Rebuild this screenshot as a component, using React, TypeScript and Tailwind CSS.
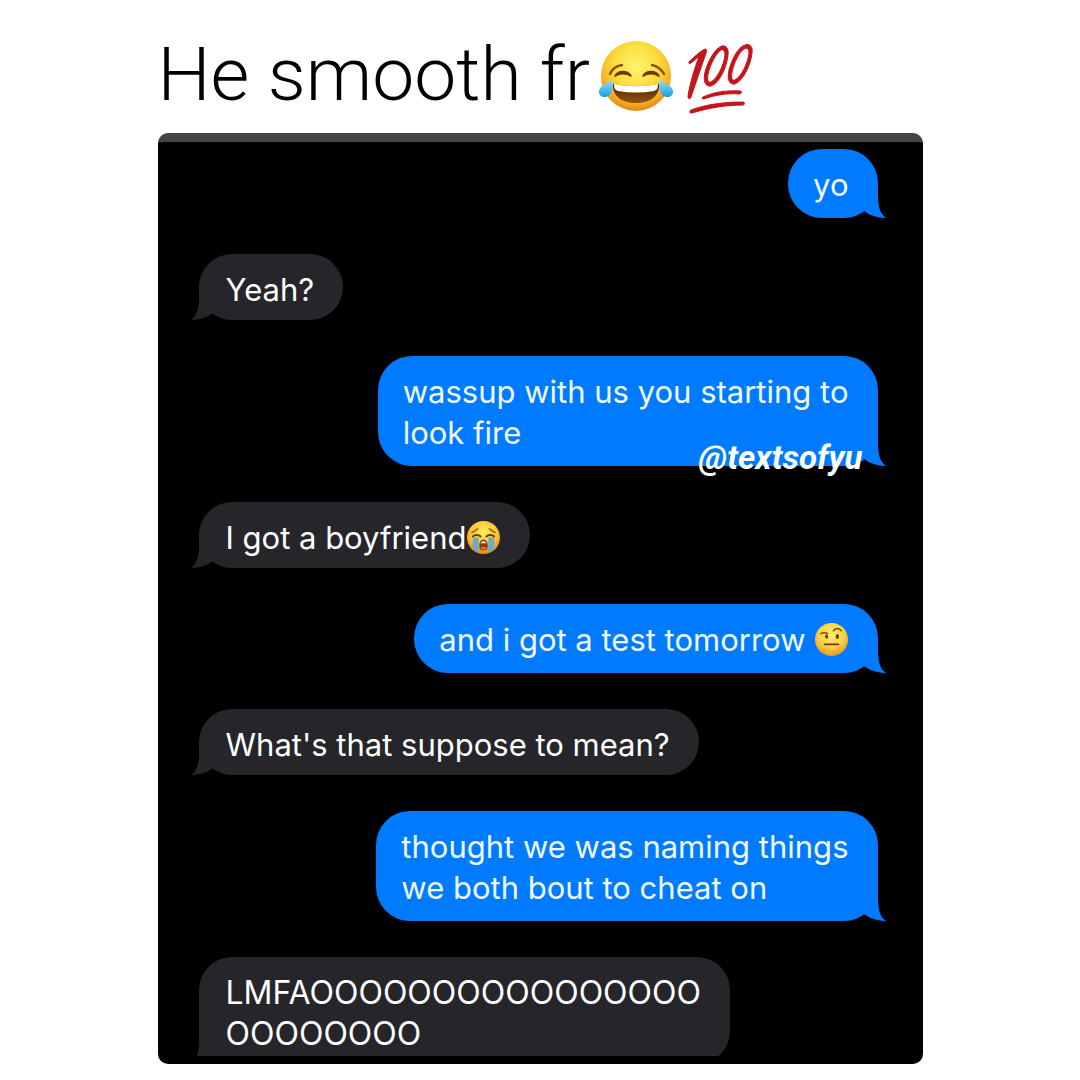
import type { ReactNode } from "react";

function JoyEmoji() {
  return (
    <svg role="img" aria-label="face with tears of joy" viewBox="0 0 76 72" className="mt-1 h-[72px] w-[76px] shrink-0">
      <defs>
        <radialGradient id="joyFace" cx="50%" cy="36%" r="65%">
          <stop offset="0" stopColor="#fff56e" />
          <stop offset="0.5" stopColor="#fddc3c" />
          <stop offset="0.82" stopColor="#f4ac22" />
          <stop offset="1" stopColor="#dd8511" />
        </radialGradient>
        <linearGradient id="joyMouth" x1="0" y1="0" x2="0" y2="1">
          <stop offset="0" stopColor="#4a2606" />
          <stop offset="1" stopColor="#94520d" />
        </linearGradient>
        <linearGradient id="joyTear" x1="0" y1="0" x2="0" y2="1">
          <stop offset="0" stopColor="#9be2fb" />
          <stop offset="1" stopColor="#1b9de2" />
        </linearGradient>
      </defs>
      <circle cx="38" cy="36" r="35" fill="url(#joyFace)" />
      <path d="M12 34C14 29 18 26 24 25M54 25C59 26 63 29 66 34" fill="none" stroke="#8a5208" strokeWidth="2.4" strokeLinecap="round" />
      <path d="M17 36C20 30 30 30 33 36C28 33 22 33 17 36ZM45 36C48 30 58 30 61 36C56 33 50 33 45 36Z" fill="#6c3a05" stroke="#6c3a05" strokeWidth="1.6" strokeLinejoin="round" />
      <path d="M15 44C30 47 46 47 61 44C62 56 52 63 38 63S14 56 15 44Z" fill="url(#joyMouth)" />
      <path d="M16 44C30 47 46 47 60 44C60 48 59 50 56 51C44 53 32 53 20 51C17 50 16 48 16 44Z" fill="#fff" />
      <path d="M14 39C16 47 14 57 7 57C1 57-1 51 3 47C6 44 11 43 14 39Z" fill="url(#joyTear)" />
      <path d="M62 39C60 47 62 57 69 57C75 57 77 51 73 47C70 44 65 43 62 39Z" fill="url(#joyTear)" />
    </svg>
  );
}

function HundredEmoji() {
  return (
    <svg role="img" aria-label="hundred points" viewBox="0 0 68 76" className="mt-1 h-[76px] w-[68px] shrink-0">
      <g fill="#c4151b" stroke="#c4151b" strokeWidth="1" strokeLinejoin="round">
        <path d="M3 22C7 18 13 12 19 9C21 9 21 11 20 13L5 57C4 60 2 59 2 56C4 43 9 27 13 17C10 18 7 22 5 23C4 24 2 23 3 22Z" />
        <path
          fillRule="evenodd"
          d="M36 6C40 5 43 9 42 15C41 26 34 43 25 46C19 47 17 41 19 32C22 21 29 8 36 6ZM35 10C30 13 24 25 22 34C21 40 22 43 25 42C31 39 38 25 39 15C39 11 37 9 35 10Z"
        />
        <path
          fillRule="evenodd"
          d="M59 5C64 3 67 7 66 13C65 24 58 40 49 44C43 45 41 39 43 30C46 19 52 7 59 5ZM58 9C53 12 48 23 46 32C45 38 46 41 49 40C55 37 62 23 63 13C63 9 61 7 58 9Z"
        />
        <path d="M17 57C28 52 41 50 54 51C56 51 56 53 54 54C41 53 29 55 18 59C16 59 15 58 17 57Z" />
        <path d="M5 70C21 64 40 62 57 62C59 62 59 65 57 65C40 65 22 68 6 73C4 74 3 71 5 70Z" />
      </g>
    </svg>
  );
}

function SobEmoji() {
  return (
    <svg role="img" aria-label="loudly crying face" viewBox="0 0 36 36" className="inline-block size-[35px] shrink-0">
      <defs>
        <radialGradient id="sobFace" cx="50%" cy="35%" r="65%">
          <stop offset="0" stopColor="#ffe95c" />
          <stop offset="0.6" stopColor="#fcc838" />
          <stop offset="1" stopColor="#e28a1c" />
        </radialGradient>
      </defs>
      <circle cx="18" cy="18" r="17" fill="url(#sobFace)" />
      <path d="M6 13C8 12 10 11 12 9M24 9C26 11 28 12 30 13" fill="none" stroke="#8a5a14" strokeWidth="1.4" strokeLinecap="round" />
      <path d="M7 17C9 15 13 15 15 17M21 17C23 15 27 15 29 17" fill="none" stroke="#6a3d08" strokeWidth="2" strokeLinecap="round" />
      <path d="M7 18H13V34C11 33 8 31 7 29ZM23 18H29V29C28 31 25 33 23 34Z" fill="#6fa9c4" />
      <path d="M18 20C22 20 23 25 22 29C21 32 15 32 14 29C13 25 14 20 18 20Z" fill="#8a3d10" />
      <path d="M15 24C16 21 20 21 21 24Z" fill="#fff" />
      <path d="M15 29C16 27 20 27 21 29C20 31 16 31 15 29Z" fill="#e4664b" />
    </svg>
  );
}

function BrowEmoji() {
  return (
    <svg role="img" aria-label="face with raised eyebrow" viewBox="0 0 36 36" className="inline-block size-[35px] shrink-0">
      <defs>
        <radialGradient id="browFace" cx="50%" cy="35%" r="65%">
          <stop offset="0" stopColor="#ffef70" />
          <stop offset="0.6" stopColor="#fdcf40" />
          <stop offset="1" stopColor="#e9962a" />
        </radialGradient>
      </defs>
      <circle cx="18" cy="18" r="17" fill="url(#browFace)" />
      <path d="M7 12C9 11 12 11 14 12M20 9C22 6 26 6 28 9" fill="none" stroke="#7a4a0c" strokeWidth="1.6" strokeLinecap="round" />
      <ellipse cx="13" cy="15" rx="1.6" ry="2.2" fill="#65400d" />
      <ellipse cx="24" cy="15" rx="1.7" ry="2.6" fill="#65400d" />
      <path d="M11 23H25" stroke="#65400d" strokeWidth="2" strokeLinecap="round" />
    </svg>
  );
}

const TAIL = "M34 0V12C34 22 36 30 42 34C37 34 28 33 20 27L12 0Z";

function Sent({ children }: { children: ReactNode }) {
  return (
    <li className="relative self-end rounded-[34px] bg-[#007aff] pt-[15px] pr-[29px] pb-[13px] pl-[25px] text-[#eefaff]">
      <svg aria-hidden="true" viewBox="0 0 42 34" className="absolute -right-2 bottom-0 h-[34px] w-[42px] text-[#007aff]">
        <path d={TAIL} fill="currentColor" />
      </svg>
      {children}
    </li>
  );
}

function Received({ children }: { children: ReactNode }) {
  return (
    <li className="relative self-start rounded-[33px] bg-[#26252a] pt-[15px] pr-[29px] pb-[10px] pl-[27px]">
      <svg aria-hidden="true" viewBox="0 0 42 34" className="absolute bottom-0 -left-2 h-[34px] w-[42px] -scale-x-100 text-[#26252a]">
        <path d={TAIL} fill="currentColor" />
      </svg>
      {children}
    </li>
  );
}

export default function App() {
  return (
    <main className="min-h-screen bg-white pt-9 pb-4">
      <article className="mx-auto w-full max-w-[765px]">
        <h1 className="flex h-[97px] items-start text-[75px] leading-[76px] font-light text-black [font-family:Roboto,sans-serif]">
          <span className="pr-2">He smooth fr</span>
          <JoyEmoji />
          <span className="w-3" />
          <HundredEmoji />
        </h1>
        <section aria-label="Conversation" className="overflow-hidden rounded-[10px] border-t-[9px] border-[#444] bg-black pb-2">
          <div className="h-[914px] overflow-hidden pt-[7px] pr-[45px] pl-[41px]">
            <ul className="flex flex-col gap-9 text-[31px] leading-[41px] text-white [font-family:Inter,sans-serif]">
              <Sent>yo</Sent>
              <Received>Yeah?</Received>
              <Sent>
                wassup with us you starting to
                <br />
                look fire
                <span className="absolute right-[15px] -bottom-3 text-[33px] font-bold text-white italic [font-family:Roboto,sans-serif]">
                  @textsofyu
                </span>
              </Sent>
              <Received>
                <span className="flex items-center">
                  I got a boyfriend
                  <SobEmoji />
                </span>
              </Received>
              <Sent>
                <span className="flex items-center gap-2">
                  and i got a test tomorrow
                  <BrowEmoji />
                </span>
              </Sent>
              <Received>What's that suppose to mean?</Received>
              <Sent>
                thought we was naming things
                <br />
                we both bout to cheat on
              </Sent>
              <Received>
                <span className="text-[32px]">
                  LMFAOOOOOOOOOOOOOOOO
                  <br />
                  OOOOOOOO
                </span>
              </Received>
            </ul>
          </div>
        </section>
      </article>
    </main>
  );
}
